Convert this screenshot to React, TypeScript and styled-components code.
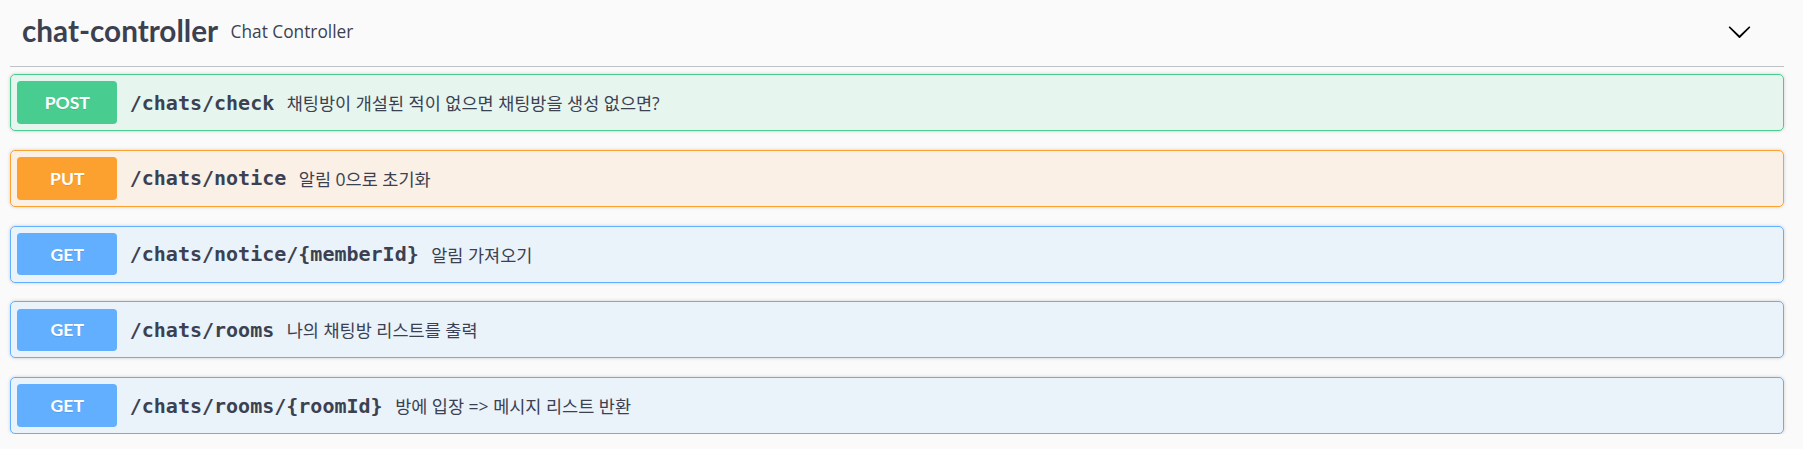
import React from "react";
import styled, { createGlobalStyle } from "styled-components";

const GlobalStyle = createGlobalStyle`
  html, body {
    margin: 0;
    padding: 0;
    background: #fafafa;
  }
  * { box-sizing: border-box; }
`;

type Method = "POST" | "PUT" | "GET";

const METHOD_COLORS: Record<Method, { main: string; bg: string }> = {
  POST: { main: "#49cc90", bg: "rgba(73, 204, 144, 0.1)" },
  PUT: { main: "#fca130", bg: "rgba(252, 161, 48, 0.1)" },
  GET: { main: "#61affe", bg: "rgba(97, 175, 254, 0.1)" },
};

const Page = styled.div`
  padding: 0 19px 0 10px;
  font-family: "Open Sans", "Noto Sans CJK KR", sans-serif;
  color: #3b4151;
`;

const TagSection = styled.section`
  display: flex;
  flex-direction: column;
`;

const TagHeader = styled.h3`
  margin: 0;
  height: 67px;
  display: flex;
  align-items: center;
  padding: 0 0 4px 12px;
  border-bottom: 1px solid rgba(59, 65, 81, 0.3);
  color: #3b4151;
`;

const TagTitle = styled.span`
  font-family: "Lato", "Open Sans", sans-serif;
  font-weight: 700;
  font-size: 29.7px;
  line-height: 1.2;
`;

const TagDescription = styled.small`
  flex: 1;
  padding: 0 12.5px;
  font-family: "Open Sans", "Noto Sans CJK KR", sans-serif;
  font-weight: 400;
  font-size: 17.3px;
  color: #3b4151;
`;

const ExpandButton = styled.button`
  display: flex;
  align-items: center;
  justify-content: center;
  width: 25px;
  height: 25px;
  padding: 0;
  margin-right: 32px;
  border: none;
  background: none;
  cursor: pointer;
`;

const OperationList = styled.div`
  display: flex;
  flex-direction: column;
  gap: 18.75px;
  margin-top: 7px;
`;

const Opblock = styled.div<{ $method: Method }>`
  display: flex;
  align-items: center;
  padding: 6.25px;
  border: 1px solid ${(p) => METHOD_COLORS[p.$method].main};
  border-radius: 5px;
  background: ${(p) => METHOD_COLORS[p.$method].bg};
  box-shadow: 0 0 3.75px rgba(0, 0, 0, 0.19);
`;

const MethodBadge = styled.span<{ $method: Method }>`
  display: flex;
  align-items: center;
  justify-content: center;
  width: 100px;
  height: 42.5px;
  flex-shrink: 0;
  border-radius: 3.75px;
  background: ${(p) => METHOD_COLORS[p.$method].main};
  color: #fff;
  font-family: "Lato", "Open Sans", sans-serif;
  font-weight: 700;
  font-size: 17.5px;
  text-shadow: 0 1px 0 rgba(0, 0, 0, 0.1);
`;

const Path = styled.span`
  padding: 0 12.5px;
  font-family: "DejaVu Sans Mono", "Liberation Mono", monospace;
  font-weight: 700;
  font-size: 20px;
  color: #3b4151;
`;

const Description = styled.span`
  flex: 1;
  font-family: "Open Sans", "Noto Sans CJK KR", sans-serif;
  font-size: 17.5px;
  color: #3b4151;
`;

const Chevron = () => (
  <svg width="25" height="25" viewBox="0 0 20 20" aria-hidden="true">
    <path
      fill="#000"
      d="M17.418 6.109c.272-.268.709-.268.979 0s.271.701 0 .969l-7.908 7.83c-.27.268-.707.268-.979 0l-7.908-7.83c-.27-.268-.27-.701 0-.969.271-.268.709-.268.979 0L10 13.25l7.418-7.141z"
    />
  </svg>
);

const operations: { method: Method; path: string; summary: string }[] = [
  { method: "POST", path: "/chats/check", summary: "채팅방이 개설된 적이 없으면 채팅방을 생성 없으면?" },
  { method: "PUT", path: "/chats/notice", summary: "알림 0으로 초기화" },
  { method: "GET", path: "/chats/notice/{memberId}", summary: "알림 가져오기" },
  { method: "GET", path: "/chats/rooms", summary: "나의 채팅방 리스트를 출력" },
  { method: "GET", path: "/chats/rooms/{roomId}", summary: "방에 입장 => 메시지 리스트 반환" },
];

export default function App() {
  return (
    <>
      <GlobalStyle />
      <Page>
        <TagSection>
          <TagHeader>
            <TagTitle>chat-controller</TagTitle>
            <TagDescription>Chat Controller</TagDescription>
            <ExpandButton aria-label="Collapse operation">
              <Chevron />
            </ExpandButton>
          </TagHeader>
          <OperationList>
            {operations.map((op) => (
              <Opblock key={op.method + op.path} $method={op.method}>
                <MethodBadge $method={op.method}>{op.method}</MethodBadge>
                <Path>{op.path}</Path>
                <Description>{op.summary}</Description>
              </Opblock>
            ))}
          </OperationList>
        </TagSection>
      </Page>
    </>
  );
}
